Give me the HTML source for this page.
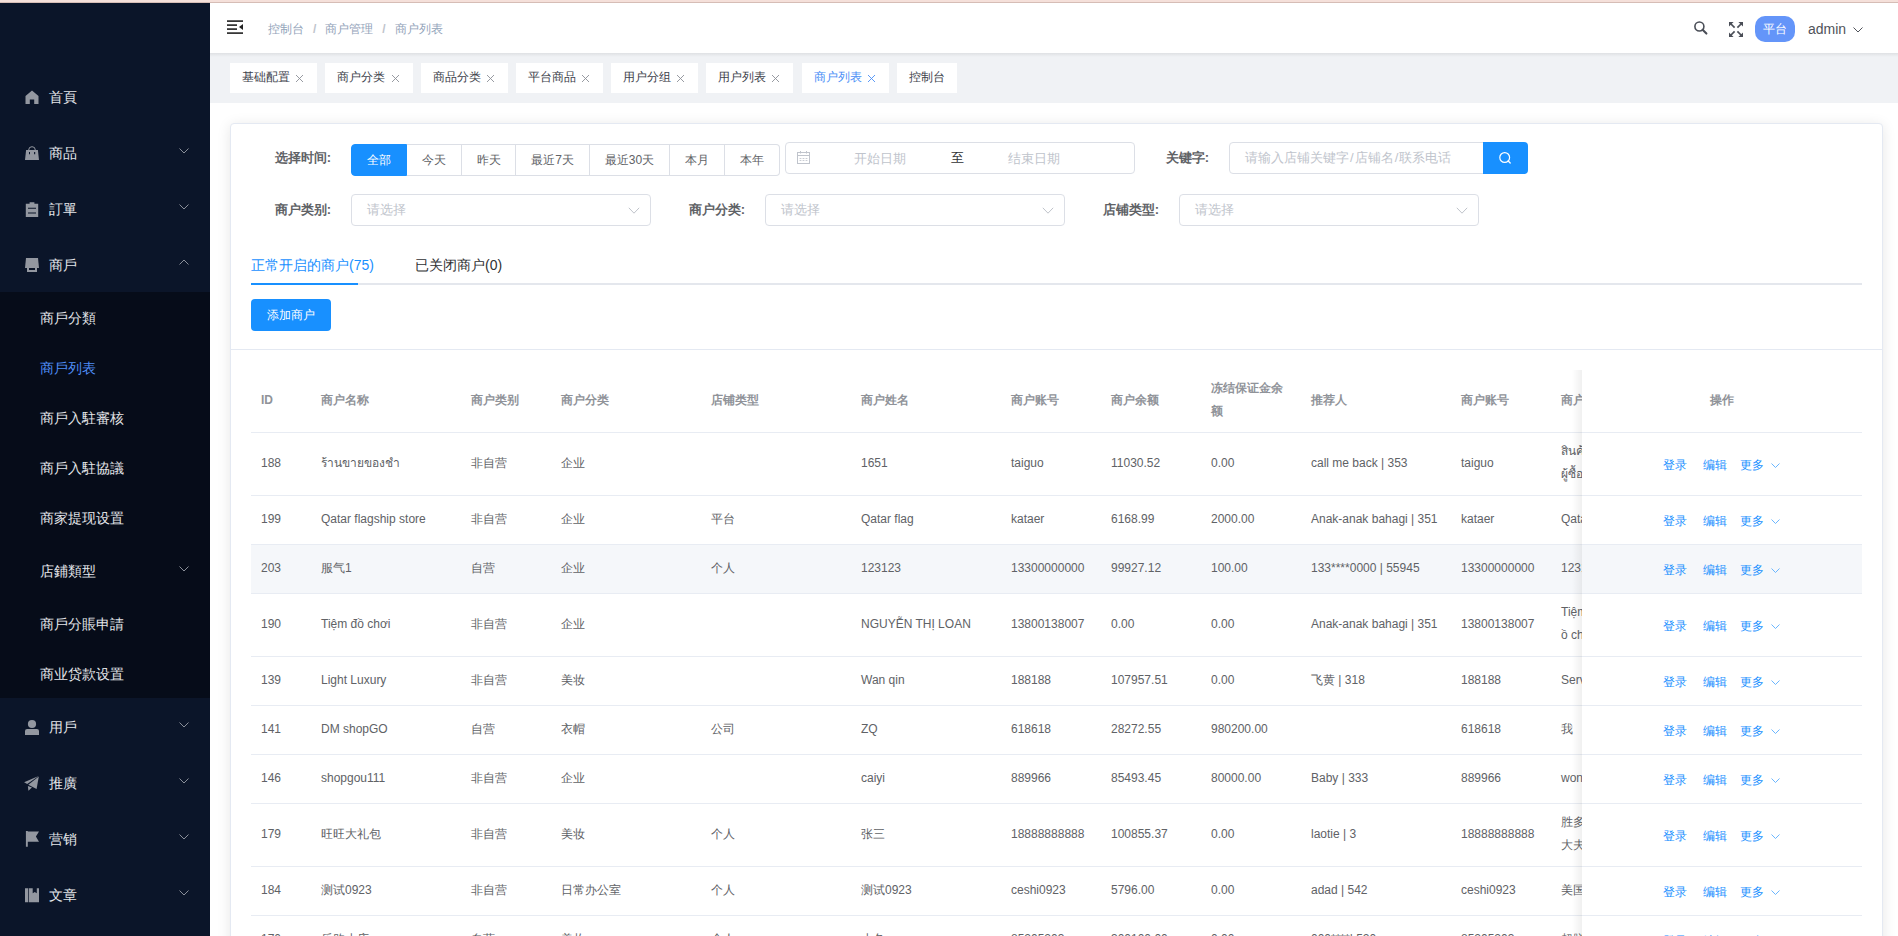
<!DOCTYPE html><html><head><meta charset="utf-8"><style>
*{box-sizing:border-box;margin:0;padding:0}
html,body{width:1898px;height:936px;overflow:hidden;background:#fff;font-family:"Liberation Sans",sans-serif;}
.a{position:absolute}
#topline{position:absolute;left:0;top:0;width:1898px;height:3px;background:#f5e0da;border-bottom:1px solid #d6bdb6}
#side{position:absolute;left:0;top:3px;width:210px;height:933px;background:#0b1529;color:#e4e6ea;font-size:14px;overflow:hidden}
#side .it{position:absolute;left:0;width:210px;height:56px;line-height:56px}
#side .ic{position:absolute;left:25px;width:14px;height:14px}
#side .tx{position:absolute;left:49px;top:0;white-space:nowrap}
#side .ar{position:absolute;left:179px;width:10px;height:6px}
#side .sub{position:absolute;left:0;top:289px;width:210px;height:406px;background:#060c19}
#side .si{position:absolute;left:40px;height:50px;line-height:50px;white-space:nowrap}
#side .si.act{color:#4f8ef7}
#header{position:absolute;left:210px;top:3px;width:1688px;height:50px;background:#fff}
#tagbar{position:absolute;left:210px;top:53px;width:1688px;height:50px;background:#f0f2f5}
#tagbar:before{content:"";position:absolute;left:0;top:0;width:100%;height:4px;background:linear-gradient(rgba(0,0,0,.07),rgba(0,0,0,0))}
.tag{position:absolute;top:10px;height:30px;line-height:29px;background:#fff;font-size:12px;color:#3d414b;padding-left:12px;white-space:nowrap}
.tag svg{position:absolute;top:11px;width:9px;height:9px}
.tag.act{color:#4a8ef6}
#card{position:absolute;left:230px;top:123px;width:1653px;height:900px;background:#fff;border:1px solid #e4e9f2;border-radius:4px;box-shadow:0 2px 14px 0 rgba(0,0,0,.1)}
#chead{position:absolute;left:0;top:0;width:1651px;height:226px;border-bottom:1px solid #e4e9f2}
.lbl{position:absolute;font-size:13px;font-weight:bold;color:#606266;white-space:nowrap;text-align:right;line-height:28px;height:32px}
.rb{position:absolute;top:20px;height:32px;line-height:30px;border:1px solid #dcdfe6;border-left:0;font-size:12px;color:#606266;text-align:center;white-space:nowrap;background:#fff}
.rb.first{border-left:1px solid #1890ff;background:#1890ff;border-color:#1890ff;color:#fff;border-radius:4px 0 0 4px}
.rb.last{border-radius:0 4px 4px 0}
.inp{position:absolute;height:32px;border:1px solid #dcdfe6;border-radius:4px;background:#fff;font-size:13px;color:#c0c4cc;line-height:30px;white-space:nowrap}
.tabs{position:absolute;left:20px;top:159px;width:1611px;height:2px;background:#e4e7ed}
.tab{position:absolute;top:133px;font-size:14px;line-height:20px;white-space:nowrap;color:#303133}
.btn{position:absolute;left:20px;top:175px;width:80px;height:32px;line-height:32px;background:#1890ff;color:#fff;font-size:12px;text-align:center;border-radius:4px}
table{border-collapse:collapse;table-layout:fixed;font-size:12px;color:#606266}
td,th{padding:8px 0;border-bottom:1px solid #e8ecf3;text-align:left;vertical-align:middle}
th{color:#909399;font-weight:bold}
.cell{padding:0 10px;line-height:23px;white-space:nowrap;overflow:hidden;position:relative;top:-1px}
.wrap{white-space:normal}
tr.hov td{background:#f5f7fa}
#fixed{position:absolute;left:1351px;top:20px;width:280px;background:#fff;overflow:visible}
#fixed:before{content:'';position:absolute;left:-10px;top:0;width:10px;height:700px;background:linear-gradient(to right,rgba(0,0,0,0),rgba(0,0,0,.06))}
.ops{text-align:center;color:#1890ff;font-size:12px;white-space:nowrap;height:32px;line-height:32px;position:relative;top:1px;padding-right:2px}
.ops span{display:inline-block}
</style></head><body><div id="topline"></div>
<div id="side"><div class="sub"></div><svg class="a" style="left:25px;top:87px;width:14px;height:14px;overflow:visible" viewBox="0 0 14 14" fill="#9397a0"><path d="M7 0.5 L13.5 6 V14 H9.2 V9.5 H4.8 V14 H0.5 V6 Z"/></svg><div class="a" style="left:49px;top:84px;line-height:20px;white-space:nowrap">首頁</div><svg class="a" style="left:25px;top:143px;width:14px;height:14px;overflow:visible" viewBox="0 0 14 14" fill="#9397a0"><path d="M3.7 4 A3.3 3.3 0 0 1 10.3 4" fill="none" stroke="#9397a0" stroke-width="1"/><path d="M1.1 3.9 H12.9 L14 13.9 H0 Z M4 6 V8.2 H5 V6 Z M9.1 6 V8.2 H10.2 V6 Z" fill-rule="evenodd"/></svg><div class="a" style="left:49px;top:140px;line-height:20px;white-space:nowrap">商品</div><svg class="a" style="left:179px;top:145px;width:10px;height:6px" viewBox="0 0 10 6"><path d="M0.5 0.5 L5 5 L9.5 0.5" fill="none" stroke="#8a8f99" stroke-width="1"/></svg><svg class="a" style="left:25px;top:199px;width:14px;height:15px;overflow:visible" viewBox="0 0 14 15" fill="#9397a0"><path d="M4.6 0.2 H9.4 V1.8 H13.2 V15 H0.8 V1.8 H4.6 Z M3 5.8 V6.8 H11 V5.8 Z M3 10.4 V11.4 H11 V10.4 Z" fill-rule="evenodd"/></svg><div class="a" style="left:49px;top:196px;line-height:20px;white-space:nowrap">訂單</div><svg class="a" style="left:179px;top:201px;width:10px;height:6px" viewBox="0 0 10 6"><path d="M0.5 0.5 L5 5 L9.5 0.5" fill="none" stroke="#8a8f99" stroke-width="1"/></svg><svg class="a" style="left:25px;top:255px;width:14px;height:14px;overflow:visible" viewBox="0 0 14 14" fill="#9397a0"><path d="M1 0 H13 L14 10 H0 Z"/><path d="M2 10 H12 V14 H2 Z M4 10 V12 H10 V10 Z" fill-rule="evenodd"/></svg><div class="a" style="left:49px;top:252px;line-height:20px;white-space:nowrap">商戶</div><svg class="a" style="left:179px;top:256px;width:10px;height:6px" viewBox="0 0 10 6"><path d="M0.5 5.5 L5 1 L9.5 5.5" fill="none" stroke="#8a8f99" stroke-width="1"/></svg><svg class="a" style="left:25px;top:717px;width:14px;height:15px;overflow:visible" viewBox="0 0 14 15" fill="#9397a0"><circle cx="7" cy="4" r="4.1"/><path d="M0 15 V11 Q0 8.9 2.1 8.9 H11.9 Q14 8.9 14 11 V15 Z"/></svg><div class="a" style="left:49px;top:714px;line-height:20px;white-space:nowrap">用戶</div><svg class="a" style="left:179px;top:719px;width:10px;height:6px" viewBox="0 0 10 6"><path d="M0.5 0.5 L5 5 L9.5 0.5" fill="none" stroke="#8a8f99" stroke-width="1"/></svg><svg class="a" style="left:25px;top:773px;width:14px;height:14px;overflow:visible" viewBox="0 0 14 14" fill="#9397a0"><path d="M-0.9 6.3 L13.7 0.1 L2.2 7.9 Z"/><path d="M13.8 0.4 L11.6 13 L3.3 8.8 Z"/><path d="M2.9 9.9 L3.4 14.8 L7 11.5 Z"/></svg><div class="a" style="left:49px;top:770px;line-height:20px;white-space:nowrap">推廣</div><svg class="a" style="left:179px;top:775px;width:10px;height:6px" viewBox="0 0 10 6"><path d="M0.5 0.5 L5 5 L9.5 0.5" fill="none" stroke="#8a8f99" stroke-width="1"/></svg><svg class="a" style="left:25px;top:829px;width:14px;height:14px;overflow:visible" viewBox="0 0 14 14" fill="#9397a0"><path d="M0.9 -1 H2.8 V14.8 H0.9 Z M2.8 -0.6 H14 L10.9 4.6 L14 9.8 H2.8 Z"/></svg><div class="a" style="left:49px;top:826px;line-height:20px;white-space:nowrap">营销</div><svg class="a" style="left:179px;top:831px;width:10px;height:6px" viewBox="0 0 10 6"><path d="M0.5 0.5 L5 5 L9.5 0.5" fill="none" stroke="#8a8f99" stroke-width="1"/></svg><svg class="a" style="left:25px;top:885px;width:14px;height:14px;overflow:visible" viewBox="0 0 14 14" fill="#9397a0"><path d="M0 0.2 H3.3 V14.3 H0 Z M4 0.2 H14 V14.3 H4 Z M7.7 0.2 V5.2 L9.75 3.9 L11.8 5.2 V0.2 Z" fill-rule="evenodd"/></svg><div class="a" style="left:49px;top:882px;line-height:20px;white-space:nowrap">文章</div><svg class="a" style="left:179px;top:887px;width:10px;height:6px" viewBox="0 0 10 6"><path d="M0.5 0.5 L5 5 L9.5 0.5" fill="none" stroke="#8a8f99" stroke-width="1"/></svg><div class="a" style="left:40px;top:305px;line-height:20px;white-space:nowrap">商戶分類</div><div class="a" style="left:40px;top:355px;line-height:20px;white-space:nowrap;color:#4f8ef7">商戶列表</div><div class="a" style="left:40px;top:405px;line-height:20px;white-space:nowrap">商戶入駐審核</div><div class="a" style="left:40px;top:455px;line-height:20px;white-space:nowrap">商戶入駐協議</div><div class="a" style="left:40px;top:505px;line-height:20px;white-space:nowrap">商家提现设置</div><div class="a" style="left:40px;top:558px;line-height:20px;white-space:nowrap">店鋪類型</div><svg class="a" style="left:179px;top:563px;width:10px;height:6px" viewBox="0 0 10 6"><path d="M0.5 0.5 L5 5 L9.5 0.5" fill="none" stroke="#8a8f99" stroke-width="1"/></svg><div class="a" style="left:40px;top:611px;line-height:20px;white-space:nowrap">商戶分賬申請</div><div class="a" style="left:40px;top:661px;line-height:20px;white-space:nowrap">商业贷款设置</div></div>
<div id="header"><svg class="a" style="left:17px;top:17px;width:16px;height:14px" viewBox="0 0 16 14" fill="#222"><rect x="0" y="0.3" width="16" height="1.6"/><rect x="0" y="4.3" width="10" height="1.6"/><rect x="0" y="8.3" width="10" height="1.6"/><rect x="0" y="12.3" width="16" height="1.6"/><path d="M16 4 L12 7 L16 10 Z"/></svg><div class="a" style="left:58px;top:18px;font-size:12px;line-height:16px;color:#93a4ba;white-space:nowrap">控制台<span style="margin:0 9px;font-weight:bold;color:#c0c4cc">/</span>商户管理<span style="margin:0 9px;font-weight:bold;color:#c0c4cc">/</span>商户列表</div><svg class="a" style="left:1483px;top:18px;width:15px;height:15px" viewBox="0 0 15 15"><circle cx="6.4" cy="5.5" r="4.5" fill="none" stroke="#4a4e57" stroke-width="1.6"/><path d="M9.6 8.8 L13.4 12.6" stroke="#4a4e57" stroke-width="2.1" stroke-linecap="round"/></svg><svg class="a" style="left:1519px;top:19px;width:14px;height:15px" viewBox="0 0 14 15" fill="#4a4e57" stroke="#4a4e57" stroke-width="1.7"><path d="M0 0 H4.6 L0 4.6 Z" stroke="none"/><path d="M1.5 1.5 L5.6 5.6"/><path d="M14 0 H9.4 L14 4.6 Z" stroke="none"/><path d="M12.5 1.5 L8.4 5.6"/><path d="M0 15 H4.6 L0 10.4 Z" stroke="none"/><path d="M1.5 13.5 L5.6 9.4"/><path d="M14 15 H9.4 L14 10.4 Z" stroke="none"/><path d="M12.5 13.5 L8.4 9.4"/></svg><div class="a" style="left:1545px;top:13px;width:40px;height:26px;border-radius:10px;background:#6495f9;color:#fff;font-size:12px;line-height:26px;text-align:center">平台</div><div class="a" style="left:1598px;top:17px;font-size:14px;line-height:18px;color:#50535a">admin</div><svg class="a" style="left:1643px;top:24px;width:10px;height:6px" viewBox="0 0 10 6"><path d="M0.5 0.5 L5 5 L9.5 0.5" fill="none" stroke="#50535a" stroke-width="1"/></svg></div>
<div id="tagbar"><div class="tag" style="left:20px;width:87px">基础配置<svg style="left:65px" viewBox="0 0 9 9"><path d="M1 1 L8 8 M8 1 L1 8" stroke="#8c9097" stroke-width="0.9"/></svg></div><div class="tag" style="left:115px;width:88px">商户分类<svg style="left:66px" viewBox="0 0 9 9"><path d="M1 1 L8 8 M8 1 L1 8" stroke="#8c9097" stroke-width="0.9"/></svg></div><div class="tag" style="left:211px;width:87px">商品分类<svg style="left:65px" viewBox="0 0 9 9"><path d="M1 1 L8 8 M8 1 L1 8" stroke="#8c9097" stroke-width="0.9"/></svg></div><div class="tag" style="left:306px;width:87px">平台商品<svg style="left:65px" viewBox="0 0 9 9"><path d="M1 1 L8 8 M8 1 L1 8" stroke="#8c9097" stroke-width="0.9"/></svg></div><div class="tag" style="left:401px;width:87px">用户分组<svg style="left:65px" viewBox="0 0 9 9"><path d="M1 1 L8 8 M8 1 L1 8" stroke="#8c9097" stroke-width="0.9"/></svg></div><div class="tag" style="left:496px;width:87px">用户列表<svg style="left:65px" viewBox="0 0 9 9"><path d="M1 1 L8 8 M8 1 L1 8" stroke="#8c9097" stroke-width="0.9"/></svg></div><div class="tag act" style="left:592px;width:87px">商户列表<svg style="left:65px" viewBox="0 0 9 9"><path d="M1 1 L8 8 M8 1 L1 8" stroke="#4a8ef6" stroke-width="0.9"/></svg></div><div class="tag" style="left:687px;width:60px">控制台</div></div>
<div id="card"><div id="chead"><div class="lbl" style="left:0px;top:20px;width:100px">选择时间:</div><div class="rb first" style="left:120px;top:20px;width:56px">全部</div><div class="rb" style="left:176px;top:20px;width:55px">今天</div><div class="rb" style="left:231px;top:20px;width:54px">昨天</div><div class="rb" style="left:285px;top:20px;width:74px">最近7天</div><div class="rb" style="left:359px;top:20px;width:80px">最近30天</div><div class="rb" style="left:439px;top:20px;width:55px">本月</div><div class="rb last" style="left:494px;top:20px;width:55px">本年</div><div class="inp" style="left:554px;top:18px;width:350px"><svg class="a" style="left:11px;top:8px;width:13px;height:13px" viewBox="0 0 13 13"><rect x="0.5" y="1.5" width="12" height="11" fill="none" stroke="#c0c4cc" stroke-width="1"/><path d="M0.5 4.5 H12.5" stroke="#c0c4cc"/><path d="M3.5 0 V2.5 M9.5 0 V2.5" stroke="#c0c4cc"/><path d="M2.6 7.5 H4.4 M5.6 7.5 H7.4 M8.6 7.5 H10.4 M2.6 9.5 H4.4 M5.6 9.5 H7.4 M8.6 9.5 H10.4" stroke="#c8ccd3" stroke-width="1"/></svg><span class="a" style="left:68px;top:1px">开始日期</span><span class="a" style="left:165px;top:0;color:#303133">至</span><span class="a" style="left:222px;top:1px">结束日期</span></div><div class="lbl" style="left:878px;top:20px;width:100px">关键字:</div><div class="inp" style="left:998px;top:18px;width:259px;border-radius:4px 0 0 4px;padding-left:15px">请输入店铺关键字<span style="margin:0 1px">/</span>店铺名<span style="margin:0 1px">/</span>联系电话</div><div class="a" style="left:1252px;top:18px;width:45px;height:32px;background:#1890ff;border-radius:0 4px 4px 0"><svg class="a" style="left:16px;top:9px;width:14px;height:14px" viewBox="0 0 14 14"><circle cx="5.7" cy="6.5" r="4.9" fill="none" stroke="#fff" stroke-width="1.2"/><path d="M9.2 10 L11.2 12" stroke="#fff" stroke-width="1.3" stroke-linecap="round"/></svg></div><div class="lbl" style="left:0px;top:72px;width:100px">商户类别:</div><div class="inp" style="left:120px;top:70px;width:300px;padding-left:15px">请选择<svg class="a" style="left:276px;top:12px;width:12px;height:7px" viewBox="0 0 12 7"><path d="M0.8 0.8 L6 6.2 L11.2 0.8" fill="none" stroke="#bfc3ca" stroke-width="1"/></svg></div><div class="lbl" style="left:414px;top:72px;width:100px">商户分类:</div><div class="inp" style="left:534px;top:70px;width:300px;padding-left:15px">请选择<svg class="a" style="left:276px;top:12px;width:12px;height:7px" viewBox="0 0 12 7"><path d="M0.8 0.8 L6 6.2 L11.2 0.8" fill="none" stroke="#bfc3ca" stroke-width="1"/></svg></div><div class="lbl" style="left:828px;top:72px;width:100px">店铺类型:</div><div class="inp" style="left:948px;top:70px;width:300px;padding-left:15px">请选择<svg class="a" style="left:276px;top:12px;width:12px;height:7px" viewBox="0 0 12 7"><path d="M0.8 0.8 L6 6.2 L11.2 0.8" fill="none" stroke="#bfc3ca" stroke-width="1"/></svg></div><div class="a" style="left:20px;top:159px;width:1611px;height:2px;background:#e4e7ed"></div><div class="a" style="left:20px;top:159px;width:107px;height:2px;background:#1890ff"></div><div class="tab" style="left:20px;top:131px;color:#1890ff">正常开启的商户(75)</div><div class="tab" style="left:184px;top:131px">已关闭商户(0)</div><div class="btn" style="left:20px;top:175px">添加商户</div></div>
<div class="a" style="left:0;top:226px;width:1651px;height:700px;overflow:hidden"><table class="a" style="left:20px;top:20px;width:1500px"><colgroup><col style="width:60px"><col style="width:150px"><col style="width:90px"><col style="width:150px"><col style="width:150px"><col style="width:150px"><col style="width:100px"><col style="width:100px"><col style="width:100px"><col style="width:150px"><col style="width:100px"><col style="width:200px"></colgroup><tr><th><div class="cell" style="">ID</div></th><th><div class="cell" style="">商户名称</div></th><th><div class="cell" style="">商户类别</div></th><th><div class="cell" style="">商户分类</div></th><th><div class="cell" style="">店铺类型</div></th><th><div class="cell" style="">商户姓名</div></th><th><div class="cell" style="">商户账号</div></th><th><div class="cell" style="">商户余额</div></th><th><div class="cell wrap" style="white-space:normal;word-break:break-all">冻结保证金余额</div></th><th><div class="cell" style="">推荐人</div></th><th><div class="cell" style="">商户账号</div></th><th><div class="cell" style="">商户简介</div></th></tr><tr><td><div class="cell" style="height:46px;display:flex;flex-direction:column;justify-content:center">188</div></td><td><div class="cell" style="height:46px;display:flex;flex-direction:column;justify-content:center">ร้านขายของชำ</div></td><td><div class="cell" style="height:46px;display:flex;flex-direction:column;justify-content:center">非自营</div></td><td><div class="cell" style="height:46px;display:flex;flex-direction:column;justify-content:center">企业</div></td><td><div class="cell" style="height:46px;display:flex;flex-direction:column;justify-content:center"></div></td><td><div class="cell" style="height:46px;display:flex;flex-direction:column;justify-content:center">1651</div></td><td><div class="cell" style="height:46px;display:flex;flex-direction:column;justify-content:center">taiguo</div></td><td><div class="cell" style="height:46px;display:flex;flex-direction:column;justify-content:center">11030.52</div></td><td><div class="cell" style="height:46px;display:flex;flex-direction:column;justify-content:center">0.00</div></td><td><div class="cell" style="height:46px;display:flex;flex-direction:column;justify-content:center">call me back | 353</div></td><td><div class="cell" style="height:46px;display:flex;flex-direction:column;justify-content:center">taiguo</div></td><td><div class="cell" style="height:46px;display:flex;flex-direction:column;justify-content:center">สินค้าอุปโภค<br>ผู้ซื้อสินค้า</div></td></tr><tr><td><div class="cell" style="height:32px;display:flex;flex-direction:column;justify-content:center">199</div></td><td><div class="cell" style="height:32px;display:flex;flex-direction:column;justify-content:center">Qatar flagship store</div></td><td><div class="cell" style="height:32px;display:flex;flex-direction:column;justify-content:center">非自营</div></td><td><div class="cell" style="height:32px;display:flex;flex-direction:column;justify-content:center">企业</div></td><td><div class="cell" style="height:32px;display:flex;flex-direction:column;justify-content:center">平台</div></td><td><div class="cell" style="height:32px;display:flex;flex-direction:column;justify-content:center">Qatar flag</div></td><td><div class="cell" style="height:32px;display:flex;flex-direction:column;justify-content:center">kataer</div></td><td><div class="cell" style="height:32px;display:flex;flex-direction:column;justify-content:center">6168.99</div></td><td><div class="cell" style="height:32px;display:flex;flex-direction:column;justify-content:center">2000.00</div></td><td><div class="cell" style="height:32px;display:flex;flex-direction:column;justify-content:center">Anak-anak bahagi | 351</div></td><td><div class="cell" style="height:32px;display:flex;flex-direction:column;justify-content:center">kataer</div></td><td><div class="cell" style="height:32px;display:flex;flex-direction:column;justify-content:center">Qatar flagship</div></td></tr><tr class="hov"><td><div class="cell" style="height:32px;display:flex;flex-direction:column;justify-content:center">203</div></td><td><div class="cell" style="height:32px;display:flex;flex-direction:column;justify-content:center">服气1</div></td><td><div class="cell" style="height:32px;display:flex;flex-direction:column;justify-content:center">自营</div></td><td><div class="cell" style="height:32px;display:flex;flex-direction:column;justify-content:center">企业</div></td><td><div class="cell" style="height:32px;display:flex;flex-direction:column;justify-content:center">个人</div></td><td><div class="cell" style="height:32px;display:flex;flex-direction:column;justify-content:center">123123</div></td><td><div class="cell" style="height:32px;display:flex;flex-direction:column;justify-content:center">13300000000</div></td><td><div class="cell" style="height:32px;display:flex;flex-direction:column;justify-content:center">99927.12</div></td><td><div class="cell" style="height:32px;display:flex;flex-direction:column;justify-content:center">100.00</div></td><td><div class="cell" style="height:32px;display:flex;flex-direction:column;justify-content:center">133****0000 | 55945</div></td><td><div class="cell" style="height:32px;display:flex;flex-direction:column;justify-content:center">13300000000</div></td><td><div class="cell" style="height:32px;display:flex;flex-direction:column;justify-content:center">123123</div></td></tr><tr><td><div class="cell" style="height:46px;display:flex;flex-direction:column;justify-content:center">190</div></td><td><div class="cell" style="height:46px;display:flex;flex-direction:column;justify-content:center">Tiệm đồ chơi</div></td><td><div class="cell" style="height:46px;display:flex;flex-direction:column;justify-content:center">非自营</div></td><td><div class="cell" style="height:46px;display:flex;flex-direction:column;justify-content:center">企业</div></td><td><div class="cell" style="height:46px;display:flex;flex-direction:column;justify-content:center"></div></td><td><div class="cell" style="height:46px;display:flex;flex-direction:column;justify-content:center">NGUYỄN THỊ LOAN</div></td><td><div class="cell" style="height:46px;display:flex;flex-direction:column;justify-content:center">13800138007</div></td><td><div class="cell" style="height:46px;display:flex;flex-direction:column;justify-content:center">0.00</div></td><td><div class="cell" style="height:46px;display:flex;flex-direction:column;justify-content:center">0.00</div></td><td><div class="cell" style="height:46px;display:flex;flex-direction:column;justify-content:center">Anak-anak bahagi | 351</div></td><td><div class="cell" style="height:46px;display:flex;flex-direction:column;justify-content:center">13800138007</div></td><td><div class="cell" style="height:46px;display:flex;flex-direction:column;justify-content:center">Tiệm đ<br>ồ chơi</div></td></tr><tr><td><div class="cell" style="height:32px;display:flex;flex-direction:column;justify-content:center">139</div></td><td><div class="cell" style="height:32px;display:flex;flex-direction:column;justify-content:center">Light Luxury</div></td><td><div class="cell" style="height:32px;display:flex;flex-direction:column;justify-content:center">非自营</div></td><td><div class="cell" style="height:32px;display:flex;flex-direction:column;justify-content:center">美妆</div></td><td><div class="cell" style="height:32px;display:flex;flex-direction:column;justify-content:center"></div></td><td><div class="cell" style="height:32px;display:flex;flex-direction:column;justify-content:center">Wan qin</div></td><td><div class="cell" style="height:32px;display:flex;flex-direction:column;justify-content:center">188188</div></td><td><div class="cell" style="height:32px;display:flex;flex-direction:column;justify-content:center">107957.51</div></td><td><div class="cell" style="height:32px;display:flex;flex-direction:column;justify-content:center">0.00</div></td><td><div class="cell" style="height:32px;display:flex;flex-direction:column;justify-content:center">飞黄 | 318</div></td><td><div class="cell" style="height:32px;display:flex;flex-direction:column;justify-content:center">188188</div></td><td><div class="cell" style="height:32px;display:flex;flex-direction:column;justify-content:center">Service</div></td></tr><tr><td><div class="cell" style="height:32px;display:flex;flex-direction:column;justify-content:center">141</div></td><td><div class="cell" style="height:32px;display:flex;flex-direction:column;justify-content:center">DM shopGO</div></td><td><div class="cell" style="height:32px;display:flex;flex-direction:column;justify-content:center">自营</div></td><td><div class="cell" style="height:32px;display:flex;flex-direction:column;justify-content:center">衣帽</div></td><td><div class="cell" style="height:32px;display:flex;flex-direction:column;justify-content:center">公司</div></td><td><div class="cell" style="height:32px;display:flex;flex-direction:column;justify-content:center">ZQ</div></td><td><div class="cell" style="height:32px;display:flex;flex-direction:column;justify-content:center">618618</div></td><td><div class="cell" style="height:32px;display:flex;flex-direction:column;justify-content:center">28272.55</div></td><td><div class="cell" style="height:32px;display:flex;flex-direction:column;justify-content:center">980200.00</div></td><td><div class="cell" style="height:32px;display:flex;flex-direction:column;justify-content:center"></div></td><td><div class="cell" style="height:32px;display:flex;flex-direction:column;justify-content:center">618618</div></td><td><div class="cell" style="height:32px;display:flex;flex-direction:column;justify-content:center">我</div></td></tr><tr><td><div class="cell" style="height:32px;display:flex;flex-direction:column;justify-content:center">146</div></td><td><div class="cell" style="height:32px;display:flex;flex-direction:column;justify-content:center">shopgou111</div></td><td><div class="cell" style="height:32px;display:flex;flex-direction:column;justify-content:center">非自营</div></td><td><div class="cell" style="height:32px;display:flex;flex-direction:column;justify-content:center">企业</div></td><td><div class="cell" style="height:32px;display:flex;flex-direction:column;justify-content:center"></div></td><td><div class="cell" style="height:32px;display:flex;flex-direction:column;justify-content:center">caiyi</div></td><td><div class="cell" style="height:32px;display:flex;flex-direction:column;justify-content:center">889966</div></td><td><div class="cell" style="height:32px;display:flex;flex-direction:column;justify-content:center">85493.45</div></td><td><div class="cell" style="height:32px;display:flex;flex-direction:column;justify-content:center">80000.00</div></td><td><div class="cell" style="height:32px;display:flex;flex-direction:column;justify-content:center">Baby | 333</div></td><td><div class="cell" style="height:32px;display:flex;flex-direction:column;justify-content:center">889966</div></td><td><div class="cell" style="height:32px;display:flex;flex-direction:column;justify-content:center">wonderful</div></td></tr><tr><td><div class="cell" style="height:46px;display:flex;flex-direction:column;justify-content:center">179</div></td><td><div class="cell" style="height:46px;display:flex;flex-direction:column;justify-content:center">旺旺大礼包</div></td><td><div class="cell" style="height:46px;display:flex;flex-direction:column;justify-content:center">非自营</div></td><td><div class="cell" style="height:46px;display:flex;flex-direction:column;justify-content:center">美妆</div></td><td><div class="cell" style="height:46px;display:flex;flex-direction:column;justify-content:center">个人</div></td><td><div class="cell" style="height:46px;display:flex;flex-direction:column;justify-content:center">张三</div></td><td><div class="cell" style="height:46px;display:flex;flex-direction:column;justify-content:center">18888888888</div></td><td><div class="cell" style="height:46px;display:flex;flex-direction:column;justify-content:center">100855.37</div></td><td><div class="cell" style="height:46px;display:flex;flex-direction:column;justify-content:center">0.00</div></td><td><div class="cell" style="height:46px;display:flex;flex-direction:column;justify-content:center">laotie | 3</div></td><td><div class="cell" style="height:46px;display:flex;flex-direction:column;justify-content:center">18888888888</div></td><td><div class="cell" style="height:46px;display:flex;flex-direction:column;justify-content:center">胜多负少<br>大夫大夫</div></td></tr><tr><td><div class="cell" style="height:32px;display:flex;flex-direction:column;justify-content:center">184</div></td><td><div class="cell" style="height:32px;display:flex;flex-direction:column;justify-content:center">测试0923</div></td><td><div class="cell" style="height:32px;display:flex;flex-direction:column;justify-content:center">非自营</div></td><td><div class="cell" style="height:32px;display:flex;flex-direction:column;justify-content:center">日常办公室</div></td><td><div class="cell" style="height:32px;display:flex;flex-direction:column;justify-content:center">个人</div></td><td><div class="cell" style="height:32px;display:flex;flex-direction:column;justify-content:center">测试0923</div></td><td><div class="cell" style="height:32px;display:flex;flex-direction:column;justify-content:center">ceshi0923</div></td><td><div class="cell" style="height:32px;display:flex;flex-direction:column;justify-content:center">5796.00</div></td><td><div class="cell" style="height:32px;display:flex;flex-direction:column;justify-content:center">0.00</div></td><td><div class="cell" style="height:32px;display:flex;flex-direction:column;justify-content:center">adad | 542</div></td><td><div class="cell" style="height:32px;display:flex;flex-direction:column;justify-content:center">ceshi0923</div></td><td><div class="cell" style="height:32px;display:flex;flex-direction:column;justify-content:center">美国美国</div></td></tr><tr><td><div class="cell" style="height:32px;display:flex;flex-direction:column;justify-content:center">170</div></td><td><div class="cell" style="height:32px;display:flex;flex-direction:column;justify-content:center">乐购小店</div></td><td><div class="cell" style="height:32px;display:flex;flex-direction:column;justify-content:center">自营</div></td><td><div class="cell" style="height:32px;display:flex;flex-direction:column;justify-content:center">美妆</div></td><td><div class="cell" style="height:32px;display:flex;flex-direction:column;justify-content:center">个人</div></td><td><div class="cell" style="height:32px;display:flex;flex-direction:column;justify-content:center">小冬</div></td><td><div class="cell" style="height:32px;display:flex;flex-direction:column;justify-content:center">85205203</div></td><td><div class="cell" style="height:32px;display:flex;flex-direction:column;justify-content:center">300100.00</div></td><td><div class="cell" style="height:32px;display:flex;flex-direction:column;justify-content:center">0.00</div></td><td><div class="cell" style="height:32px;display:flex;flex-direction:column;justify-content:center">000****| 520</div></td><td><div class="cell" style="height:32px;display:flex;flex-direction:column;justify-content:center">85205203</div></td><td><div class="cell" style="height:32px;display:flex;flex-direction:column;justify-content:center">超脱超脱</div></td></tr></table><div id="fixed"><table style="width:280px"><colgroup><col style="width:280px"></colgroup><tr><th style="text-align:center"><div class="cell" style="height:46px;line-height:46px">操作</div></th></tr><tr><td><div class="ops" style="height:46px;line-height:46px"><span>登录</span><span style="margin-left:16px">编辑</span><span style="margin-left:13px">更多</span><svg style="display:inline-block;margin-left:7px;width:9px;height:5px;vertical-align:middle" viewBox="0 0 9 5"><path d="M0.5 0.5 L4.5 4.5 L8.5 0.5" fill="none" stroke="#5aaeff" stroke-width="0.9"/></svg></div></td></tr><tr><td><div class="ops" style="height:32px;line-height:32px"><span>登录</span><span style="margin-left:16px">编辑</span><span style="margin-left:13px">更多</span><svg style="display:inline-block;margin-left:7px;width:9px;height:5px;vertical-align:middle" viewBox="0 0 9 5"><path d="M0.5 0.5 L4.5 4.5 L8.5 0.5" fill="none" stroke="#5aaeff" stroke-width="0.9"/></svg></div></td></tr><tr class="hov"><td><div class="ops" style="height:32px;line-height:32px"><span>登录</span><span style="margin-left:16px">编辑</span><span style="margin-left:13px">更多</span><svg style="display:inline-block;margin-left:7px;width:9px;height:5px;vertical-align:middle" viewBox="0 0 9 5"><path d="M0.5 0.5 L4.5 4.5 L8.5 0.5" fill="none" stroke="#5aaeff" stroke-width="0.9"/></svg></div></td></tr><tr><td><div class="ops" style="height:46px;line-height:46px"><span>登录</span><span style="margin-left:16px">编辑</span><span style="margin-left:13px">更多</span><svg style="display:inline-block;margin-left:7px;width:9px;height:5px;vertical-align:middle" viewBox="0 0 9 5"><path d="M0.5 0.5 L4.5 4.5 L8.5 0.5" fill="none" stroke="#5aaeff" stroke-width="0.9"/></svg></div></td></tr><tr><td><div class="ops" style="height:32px;line-height:32px"><span>登录</span><span style="margin-left:16px">编辑</span><span style="margin-left:13px">更多</span><svg style="display:inline-block;margin-left:7px;width:9px;height:5px;vertical-align:middle" viewBox="0 0 9 5"><path d="M0.5 0.5 L4.5 4.5 L8.5 0.5" fill="none" stroke="#5aaeff" stroke-width="0.9"/></svg></div></td></tr><tr><td><div class="ops" style="height:32px;line-height:32px"><span>登录</span><span style="margin-left:16px">编辑</span><span style="margin-left:13px">更多</span><svg style="display:inline-block;margin-left:7px;width:9px;height:5px;vertical-align:middle" viewBox="0 0 9 5"><path d="M0.5 0.5 L4.5 4.5 L8.5 0.5" fill="none" stroke="#5aaeff" stroke-width="0.9"/></svg></div></td></tr><tr><td><div class="ops" style="height:32px;line-height:32px"><span>登录</span><span style="margin-left:16px">编辑</span><span style="margin-left:13px">更多</span><svg style="display:inline-block;margin-left:7px;width:9px;height:5px;vertical-align:middle" viewBox="0 0 9 5"><path d="M0.5 0.5 L4.5 4.5 L8.5 0.5" fill="none" stroke="#5aaeff" stroke-width="0.9"/></svg></div></td></tr><tr><td><div class="ops" style="height:46px;line-height:46px"><span>登录</span><span style="margin-left:16px">编辑</span><span style="margin-left:13px">更多</span><svg style="display:inline-block;margin-left:7px;width:9px;height:5px;vertical-align:middle" viewBox="0 0 9 5"><path d="M0.5 0.5 L4.5 4.5 L8.5 0.5" fill="none" stroke="#5aaeff" stroke-width="0.9"/></svg></div></td></tr><tr><td><div class="ops" style="height:32px;line-height:32px"><span>登录</span><span style="margin-left:16px">编辑</span><span style="margin-left:13px">更多</span><svg style="display:inline-block;margin-left:7px;width:9px;height:5px;vertical-align:middle" viewBox="0 0 9 5"><path d="M0.5 0.5 L4.5 4.5 L8.5 0.5" fill="none" stroke="#5aaeff" stroke-width="0.9"/></svg></div></td></tr><tr><td><div class="ops" style="height:32px;line-height:32px"><span>登录</span><span style="margin-left:16px">编辑</span><span style="margin-left:13px">更多</span><svg style="display:inline-block;margin-left:7px;width:9px;height:5px;vertical-align:middle" viewBox="0 0 9 5"><path d="M0.5 0.5 L4.5 4.5 L8.5 0.5" fill="none" stroke="#5aaeff" stroke-width="0.9"/></svg></div></td></tr></table></div></div>
</div></body></html>
